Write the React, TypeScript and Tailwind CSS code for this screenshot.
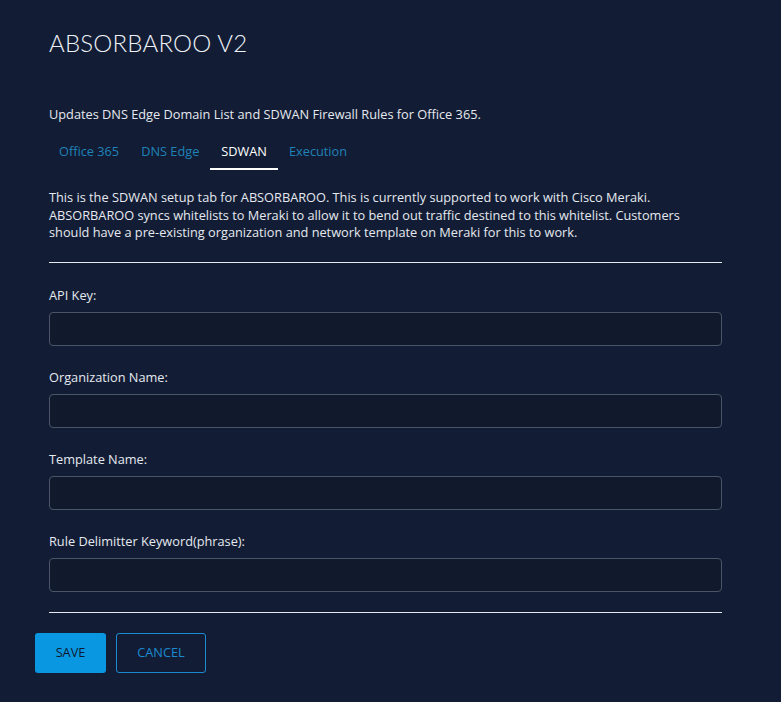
import React, { useState } from "react";

const TABS = ["Office 365", "DNS Edge", "SDWAN", "Execution"];

const FIELDS = [
  "API Key:",
  "Organization Name:",
  "Template Name:",
  "Rule Delimitter Keyword(phrase):",
];

function Field({ label }: { label: string }) {
  return (
    <div className="flex flex-col">
      <label className="text-[12.75px] leading-[18px] text-[#e6e9ef]">{label}</label>
      <input
        type="text"
        className="mt-[8px] h-[34px] w-full rounded-[4px] border border-[#4b5569] bg-[#111a2c] px-3 text-[13px] text-white outline-none"
      />
    </div>
  );
}

export default function App() {
  const [tab, setTab] = useState("SDWAN");

  return (
    <div
      className="min-h-[702px] w-full bg-[#121d35] text-[#e6e9ef]"
      style={{ fontFamily: '"Open Sans", "Liberation Sans", sans-serif' }}
    >
      <div className="pl-[49px] pr-[59px] pt-[27px]">
        <h1
          className="text-[24px] font-light leading-[32px] tracking-[0.2px] text-[#eef1f5]"
          style={{ fontFamily: 'Lato, "Open Sans", sans-serif' }}
        >
          ABSORBAROO V2
        </h1>

        <p className="mt-[46px] text-[12.75px] leading-[18px]">
          Updates DNS Edge Domain List and SDWAN Firewall Rules for Office 365.
        </p>

        <div className="-ml-px mt-[17px] flex">
          {TABS.map((t) => (
            <button
              key={t}
              onClick={() => setTab(t)}
              className={
                t === tab
                  ? "border-b-2 border-white px-[11px] pb-[8px] pt-[2px] text-[12.75px] leading-[18px] text-white"
                  : "border-b-2 border-transparent px-[11px] pb-[8px] pt-[2px] text-[12.75px] leading-[18px] text-[#1f82b8]"
              }
            >
              {t}
            </button>
          ))}
        </div>

        <p className="mt-[19px] text-[12.75px] leading-[17.5px]">
          This is the SDWAN setup tab for ABSORBAROO. This is currently supported to work with Cisco Meraki.
          <br />
          ABSORBAROO syncs whitelists to Meraki to allow it to bend out traffic destined to this whitelist. Customers
          <br />
          should have a pre-existing organization and network template on Meraki for this to work.
        </p>

        <div className="mt-[20px] h-px bg-[#e6e9ef]" />

        <div className="mt-[23px] flex flex-col gap-[22px]">
          {FIELDS.map((f) => (
            <Field key={f} label={f} />
          ))}
        </div>

        <div className="mt-[20px] h-px bg-[#e6e9ef]" />
      </div>

      <div className="flex gap-[10px] pl-[35px] pt-[20px]">
        <button className="h-[40px] w-[71px] rounded-[3px] bg-[#0a97e2] text-[12.75px] text-[#0f1a2e]">SAVE</button>
        <button className="h-[40px] w-[90px] rounded-[3px] border border-[#1b8ad0] text-[12.75px] text-[#1b8ad0]">
          CANCEL
        </button>
      </div>
    </div>
  );
}
